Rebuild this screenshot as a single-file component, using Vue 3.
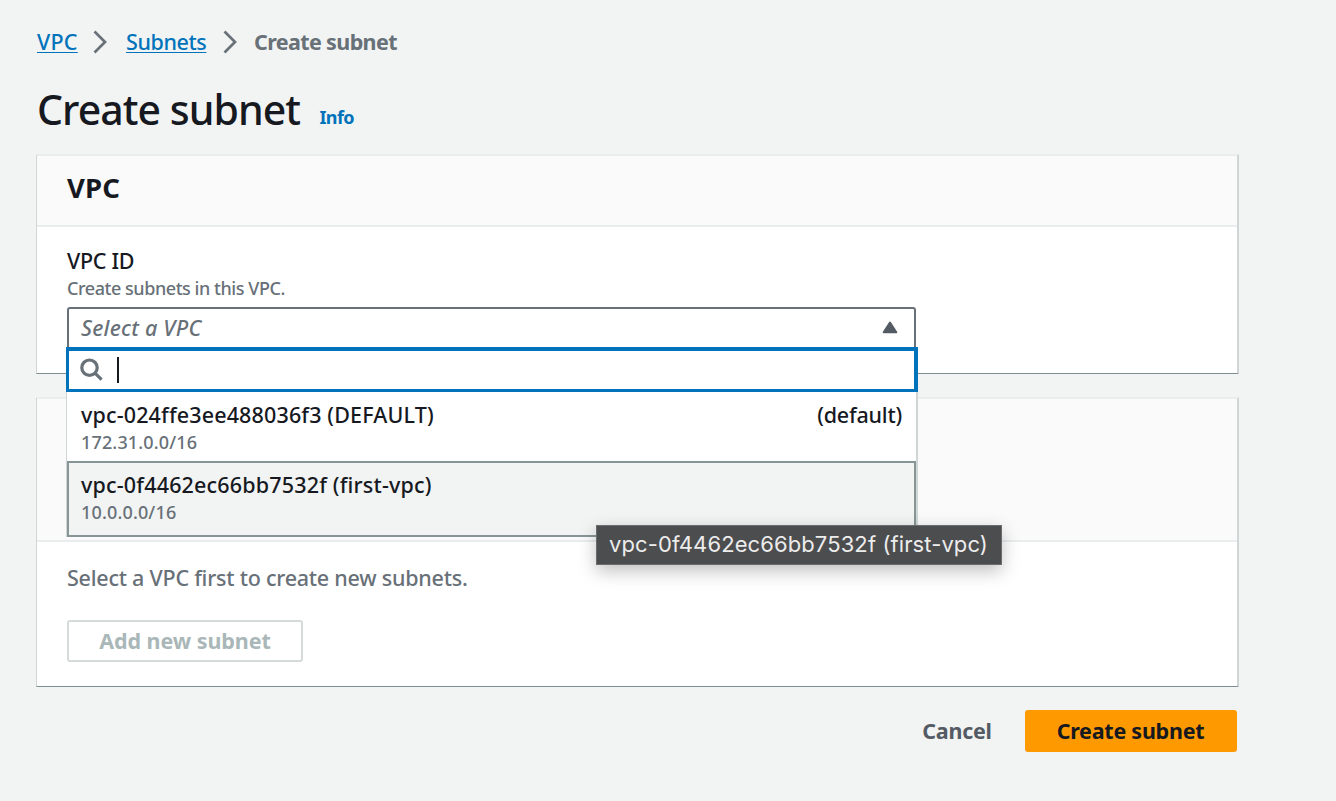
<script setup>
const options = [
  { id: 'vpc-024ffe3ee488036f3 (DEFAULT)', cidr: '172.31.0.0/16', tag: '(default)', active: false },
  { id: 'vpc-0f4462ec66bb7532f (first-vpc)', cidr: '10.0.0.0/16', tag: '', active: true },
]
</script>

<template>
  <main class="page">
    <nav class="crumbs">
      <a class="crumb-vpc">VPC</a>
      <svg class="chevron" width="16" height="24" viewBox="0 0 16 24"><path d="M1.5 1.5l10.5 10.5L1.5 22.5" /></svg>
      <a class="crumb-subnets">Subnets</a>
      <svg class="chevron last" width="16" height="24" viewBox="0 0 16 24"><path d="M1.5 1.5l10.5 10.5L1.5 22.5" /></svg>
      <span class="current">Create subnet</span>
    </nav>

    <header class="title-row">
      <h1>Create subnet</h1>
      <a class="info">Info</a>
    </header>

    <section class="card vpc-card">
      <div class="card-head"><h2>VPC</h2></div>
      <div class="card-body">
        <label class="label">VPC ID</label>
        <p class="hint">Create subnets in this VPC.</p>
        <div class="select">
          <div class="trigger">
            <span class="placeholder">Select a VPC</span>
            <svg width="16" height="13" viewBox="0 0 16 13"><path d="M8 1.5L14.3 11.3H1.7z" /></svg>
          </div>
          <div class="menu">
            <div class="search">
              <svg width="24" height="24" viewBox="0 0 24 24"><circle cx="9.5" cy="9.7" r="7.7" /><path d="M15 15.2L21.6 21.6" /></svg>
              <span class="caret"></span>
            </div>
            <div v-for="o in options" :key="o.id" class="option" :class="{ active: o.active }">
              <div class="line">
                <span class="name" :class="{ second: o.active }">{{ o.id }}</span>
                <span class="tag">{{ o.tag }}</span>
              </div>
              <div class="cidr">{{ o.cidr }}</div>
            </div>
            <div class="tooltip">vpc-0f4462ec66bb7532f (first-vpc)</div>
          </div>
        </div>
      </div>
    </section>

    <section class="card subnet-card">
      <div class="card-head"></div>
      <div class="card-body">
        <p class="message">Select a VPC first to create new subnets.</p>
        <button class="add" disabled>Add new subnet</button>
      </div>
    </section>

    <footer class="actions">
      <button class="cancel">Cancel</button>
      <button class="create">Create subnet</button>
    </footer>
  </main>
</template>

<style>
body { background: #f2f3f3; }
</style>

<style scoped>
* { box-sizing: border-box; }
.page {
  width: 1336px; height: 801px; padding: 24px 97px 0 36px; overflow: hidden;
  background: #f2f4f3; color: #16191f;
  font-family: "Noto Sans", sans-serif; font-size: 21.5px; line-height: 36px;
  white-space: nowrap;
}
h1, h2, p { margin: 0; }
.crumbs { display: flex; align-items: center; height: 36px; padding-left: 1px; }
.crumbs a { color: #0073bb; font-weight: 500; text-decoration: underline; text-decoration-thickness: 1px; text-underline-offset: 2px; }
.crumb-vpc { width: 41px; letter-spacing: 0.25px; }
.crumb-subnets { width: 81px; letter-spacing: -0.4px; }
.chevron { flex: none; margin: 0 17px 0 15px; }
.chevron.last { margin: 0 15px 0 16px; }
.chevron path { fill: none; stroke: #687078; stroke-width: 2.7; }
.current { color: #687078; font-weight: 700; letter-spacing: -0.62px; }
.title-row { display: flex; align-items: baseline; height: 94px; padding: 22px 0 0 1px; }
h1 { width: 282.5px; font-size: 41px; line-height: 54px; font-weight: 500; letter-spacing: -0.95px; }
.info { position: relative; top: -1px; color: #0073bb; font-size: 18px; font-weight: 700; letter-spacing: -0.65px; }
.card {
  width: 1203px; background: #fff; border: solid #d0d6d6; border-width: 2px 2px 1px 1px;
  border-top-color: #eaeded; border-bottom-color: #7f8e90;
}
.vpc-card { height: 220px; }
.subnet-card { height: 290px; margin-top: 23px; }
.card-head { height: 71px; padding: 13px 30px; background: #fafafa; border-bottom: 2px solid #eaeded; }
.subnet-card .card-head { height: 143px; }
h2 { font-size: 27.5px; line-height: 38px; font-weight: 700; letter-spacing: 0.2px; }
.card-body { padding: 19px 30px 0; }
.label { display: block; height: 30px; line-height: 30px; letter-spacing: -0.3px; font-weight: 500; }
.hint { height: 31px; line-height: 24px; font-size: 18px; font-weight: 500; letter-spacing: -0.45px; color: #687078; }
.select { position: relative; width: 849px; }
.trigger {
  display: flex; align-items: center; justify-content: space-between; height: 42px; padding: 0 16px 0 12px;
  border: 2px solid #687078; border-radius: 3px 3px 0 0; color: #687078;
}
.placeholder { font-style: italic; font-weight: 500; letter-spacing: 0.25px; }
.trigger svg { margin-bottom: 2px; }
.trigger path { fill: #545b64; stroke: #545b64; stroke-width: 2; stroke-linejoin: round; }
.menu {
  position: absolute; z-index: 2; top: 40px; left: -1px; width: 852px; height: 190px; background: #fff;
  border: solid #d0d6d6; border-width: 0 2px 1px 1px;
}
.search {
  display: flex; align-items: center; height: 45px; width: 852px; margin-left: -1px; padding: 0 11px;
  border: solid #0073bb; border-width: 4px 4px 3px 3px; background: #fff;
}
.search svg { fill: none; stroke: #687078; stroke-width: 3.2; }
.caret { width: 2px; height: 26px; margin-left: 13px; background: #16191f; }
.option { height: 69px; padding: 8px 14px 0; }
.option.active { height: 76px; padding: 7px 12px 0; border: 2px solid #879596; background: #f2f4f3; }
.line { display: flex; justify-content: space-between; height: 30px; line-height: 30px; }
.name, .tag { font-weight: 500; letter-spacing: 0.15px; }
.name.second { letter-spacing: 0.18px; }
.tag { letter-spacing: -0.2px; }
.cidr { line-height: 24px; font-size: 18px; font-weight: 500; color: #687078; letter-spacing: 0.15px; }
.tooltip {
  position: absolute; left: 529px; top: 178px; width: 406px; height: 40px; padding-left: 12px;
  border: 1px solid #6b6c6e; background: #4c4d4f; color: #ececec; box-shadow: 0 6px 18px rgba(0, 0, 0, .25);
  font-family: Inter, sans-serif; font-size: 22px; line-height: 37px; letter-spacing: 0.1px;
}
.message { line-height: 30px; padding-top: 2px; font-weight: 500; color: #687078; letter-spacing: -0.23px; }
.add {
  display: block; width: 236px; height: 42px; margin-top: 27px; padding: 0 0 2px; border: 2px solid #d5dbdb; border-radius: 3px;
  background: #fff; color: #aab7b8; font: 700 21.5px "Noto Sans", sans-serif; letter-spacing: -0.08px;
}
.actions { display: flex; justify-content: flex-end; height: 42px; margin: 23px 2px 0 0; }
.actions button { height: 42px; padding: 0 0 2px; border: 0; font: 700 21.5px "Noto Sans", sans-serif; letter-spacing: -0.25px; }
.actions .cancel { width: 136px; background: transparent; color: #545b64; }
.actions .create { width: 212px; padding-right: 1px; border-radius: 3px; background: #f90; color: #16191f; }
</style>
